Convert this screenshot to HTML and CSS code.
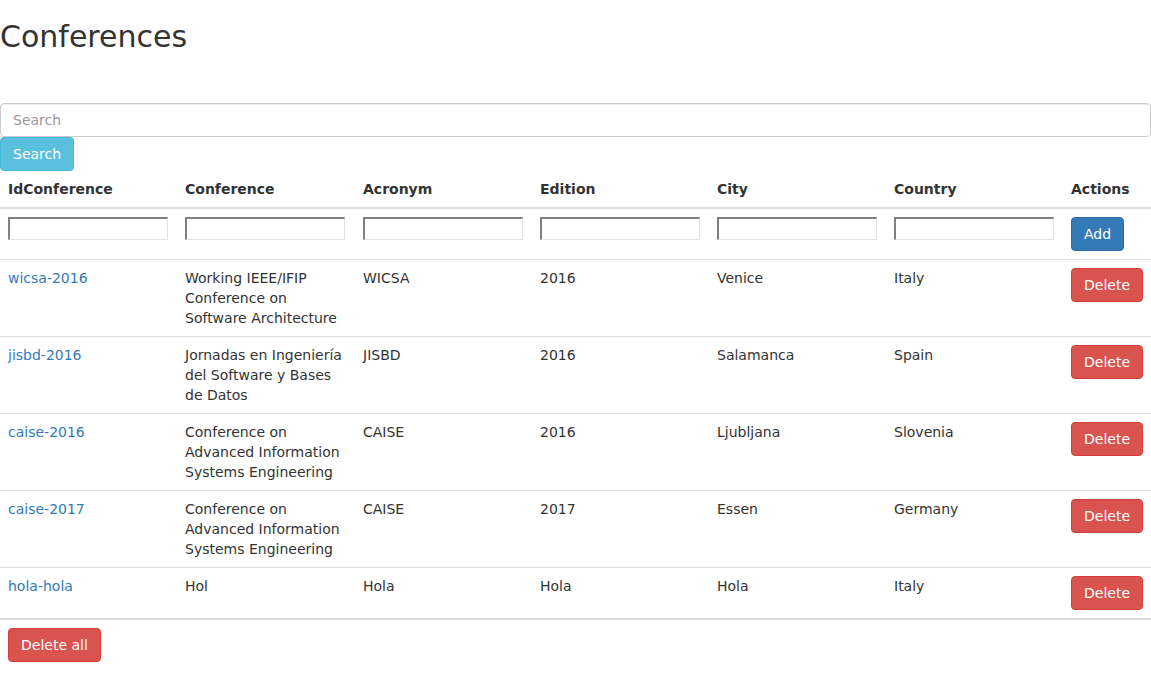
FILE: index.html
```html
<!DOCTYPE html>
<html>
<head>
<meta charset="utf-8">
<link rel="stylesheet" href="styles.css">
</head>
<body>
<h2 class="title">Conferences</h2>
<form class="search-form">
  <input class="form-control" type="text" placeholder="Search">
  <button type="button" class="btn btn-info">Search</button>
</form>
<table class="table">
  <colgroup>
    <col class="c1"><col class="c2"><col class="c3"><col class="c4"><col class="c5"><col class="c6"><col class="c7">
  </colgroup>
  <thead>
    <tr>
      <th>IdConference</th><th>Conference</th><th>Acronym</th><th>Edition</th><th>City</th><th>Country</th><th>Actions</th>
    </tr>
  </thead>
  <tbody>
    <tr class="input-row">
      <td><input class="cell-input" type="text"></td>
      <td><input class="cell-input" type="text"></td>
      <td><input class="cell-input" type="text"></td>
      <td><input class="cell-input" type="text"></td>
      <td><input class="cell-input" type="text"></td>
      <td><input class="cell-input" type="text"></td>
      <td><button type="button" class="btn btn-primary">Add</button></td>
    </tr>
    <tr>
      <td><a href="#">wicsa-2016</a></td>
      <td>Working IEEE/IFIP Conference on Software Architecture</td>
      <td>WICSA</td><td>2016</td><td>Venice</td><td>Italy</td>
      <td><button type="button" class="btn btn-danger">Delete</button></td>
    </tr>
    <tr>
      <td><a href="#">jisbd-2016</a></td>
      <td>Jornadas en Ingeniería del Software y Bases de Datos</td>
      <td>JISBD</td><td>2016</td><td>Salamanca</td><td>Spain</td>
      <td><button type="button" class="btn btn-danger">Delete</button></td>
    </tr>
    <tr>
      <td><a href="#">caise-2016</a></td>
      <td>Conference on Advanced Information Systems Engineering</td>
      <td>CAISE</td><td>2016</td><td>Ljubljana</td><td>Slovenia</td>
      <td><button type="button" class="btn btn-danger">Delete</button></td>
    </tr>
    <tr>
      <td><a href="#">caise-2017</a></td>
      <td>Conference on Advanced Information Systems Engineering</td>
      <td>CAISE</td><td>2017</td><td>Essen</td><td>Germany</td>
      <td><button type="button" class="btn btn-danger">Delete</button></td>
    </tr>
    <tr>
      <td><a href="#">hola-hola</a></td>
      <td>Hol</td>
      <td>Hola</td><td>Hola</td><td>Hola</td><td>Italy</td>
      <td><button type="button" class="btn btn-danger">Delete</button></td>
    </tr>
  </tbody>
  <tfoot>
    <tr>
      <td colspan="7"><button type="button" class="btn btn-danger">Delete all</button></td>
    </tr>
  </tfoot>
</table>
</body>
</html>
```
FILE: styles.css
```css
* { box-sizing: border-box; }
html, body {
  margin: 0;
  padding: 0;
  background: #fff;
}
body {
  font-family: "DejaVu Sans", sans-serif;
  font-size: 14px;
  line-height: 1.42857143;
  color: #333;
}
.title {
  font-size: 30px;
  font-weight: 500;
  line-height: 1.1;
  margin: 20px 0 10px 0;
  color: #333;
}
.search-form {
  margin: 50px 0 0 0;
}
.form-control {
  display: block;
  width: 100%;
  height: 34px;
  padding: 6px 12px;
  font-family: inherit;
  font-size: 14px;
  line-height: 1.42857143;
  color: #555;
  background: #fff;
  border: 1px solid #ccc;
  border-radius: 4px;
  box-shadow: inset 0 1px 1px rgba(0,0,0,.075);
  margin: 0;
}
.form-control::placeholder { color: #999; }
.btn {
  display: inline-block;
  padding: 6px 12px;
  margin: 0;
  font-family: inherit;
  font-size: 14px;
  font-weight: 400;
  line-height: 1.42857143;
  text-align: center;
  white-space: nowrap;
  vertical-align: middle;
  border: 1px solid transparent;
  border-radius: 4px;
  cursor: pointer;
  color: #fff;
}
.btn-info { background: #5bc0de; border-color: #46b8da; }
.btn-primary { background: #337ab7; border-color: #2e6da4; }
.btn-danger { background: #d9534f; border-color: #d43f3a; }
.table {
  width: 1151px;
  border-collapse: collapse;
  border-spacing: 0;
  table-layout: fixed;
  margin-bottom: 20px;
}
.c1 { width: 177px; }
.c2 { width: 178px; }
.c3, .c4, .c5, .c6 { width: 177px; }
.c7 { width: 88px; }
.table th {
  text-align: left;
  font-weight: bold;
  padding: 8px;
  line-height: 1.42857143;
  vertical-align: bottom;
  border-bottom: 2px solid #ddd;
}
.table td {
  padding: 8px;
  line-height: 1.42857143;
  vertical-align: top;
  border-top: 1px solid #ddd;
}
.table tbody tr.input-row td { border-top: 0; }
.table tfoot td { border-top: 2px solid #ddd; }
.table a {
  color: #337ab7;
  text-decoration: none;
}
.cell-input {
  width: 160px;
  height: 23px;
  margin: 0;
  padding: 1px 2px;
  font-family: inherit;
  font-size: 14px;
  border-style: solid;
  border-width: 2px 1px 1px 2px;
  border-color: #808080 #e3e3e3 #e3e3e3 #808080;
  background: #fff;
}
```
